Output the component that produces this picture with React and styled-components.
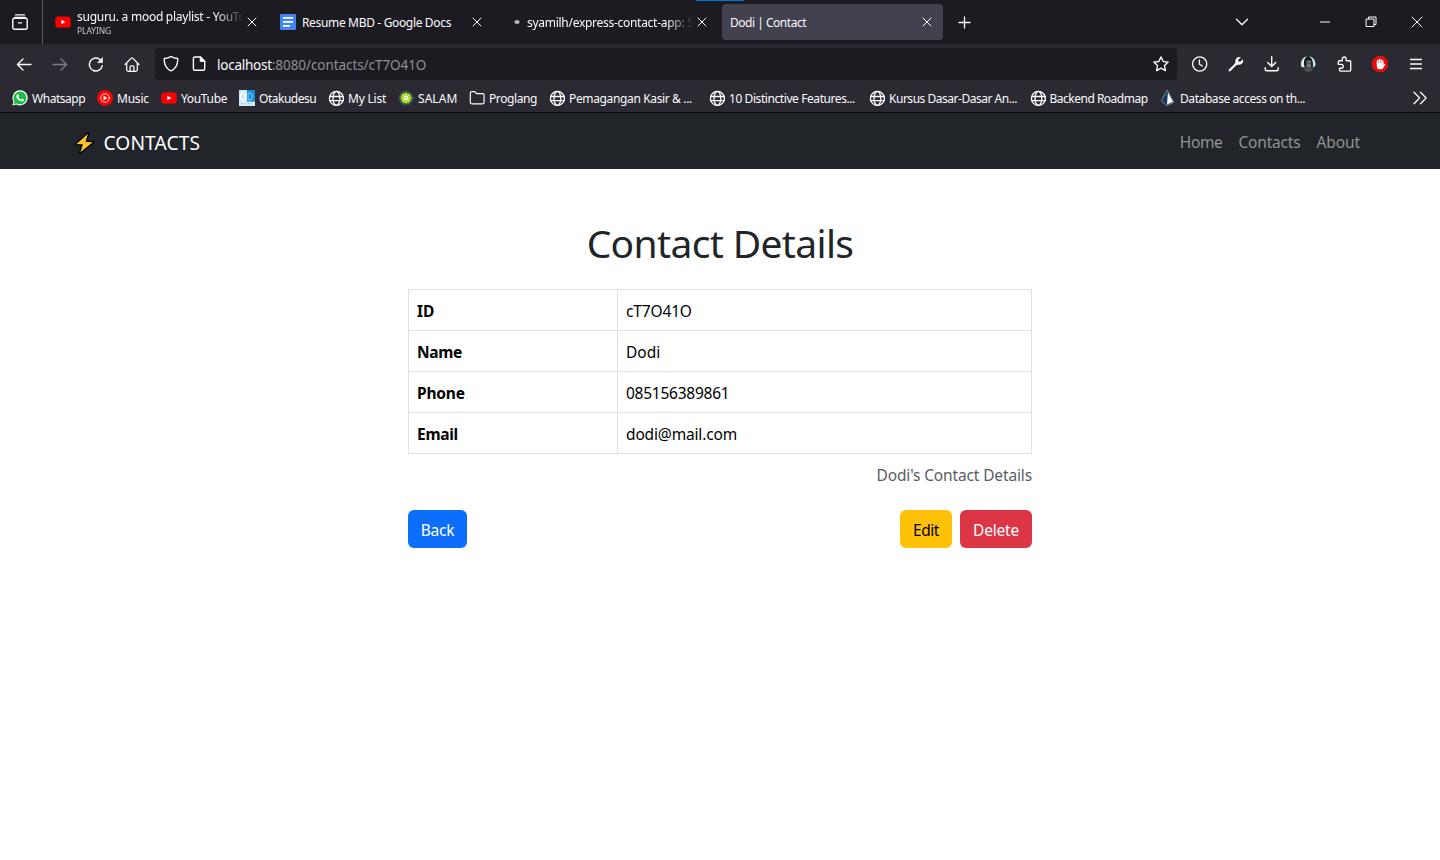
import React from "react";
import styled, { createGlobalStyle } from "styled-components";

const GlobalStyle = createGlobalStyle`
  * { box-sizing: border-box; }
  body {
    margin: 0;
    background: #fff;
    font-family: "Noto Sans", "Open Sans", sans-serif;
    overflow: hidden;
  }
`;

/* ---------- shared ---------- */

const Label = styled.span`
  white-space: pre;
  letter-spacing: ${(p) => p.$ls || 0}px;
`;

const Svg = styled.svg`
  display: block;
  flex: none;
  width: ${(p) => p.$size || 16}px;
  height: ${(p) => p.$size || 16}px;
  fill: none;
  stroke: ${(p) => p.$color || "#fbfbfe"};
  stroke-width: ${(p) => p.$w || 1.25};
  stroke-linecap: round;
  stroke-linejoin: round;
`;

const Icon = ({ children, size, color, w, box = 16 }) => (
  <Svg viewBox={`0 0 ${box} ${box}`} $size={size || box} $color={color} $w={w} aria-hidden="true">
    {children}
  </Svg>
);

/* ---------- icons ---------- */

const YouTubeIcon = () => (
  <Icon>
    <rect x="0.3" y="2.6" width="15.4" height="10.9" rx="2.8" fill="#f00" stroke="none" />
    <path d="M6.4 5.7v4.6L10.4 8z" fill="#fff" stroke="none" />
  </Icon>
);

const DocsIcon = () => (
  <Icon>
    <rect width="16" height="16" rx="1.2" fill="#4285f4" stroke="none" />
    <path d="M3 3h10v1.7H3zM3 7h10v1.7H3zM3 11h7v1.7H3z" fill="#fff" stroke="none" />
  </Icon>
);

const SpinnerIcon = () => (
  <Icon>
    <ellipse cx="12" cy="8" rx="2.6" ry="2" fill="#b9b9bd" stroke="none" />
  </Icon>
);

const CloseIcon = () => (
  <Icon w="1">
    <path d="M4 4l8 8M12 4l-8 8" />
  </Icon>
);

const TabsIcon = () => (
  <Icon w="1.4">
    <path d="M3.600 0.900h8.800" />
    <rect x="0.800" y="4.200" width="14.400" height="11" rx="1.800" />
    <path d="M2.200 4.200q.3-.7 1-.7h9.600q.7 0 1 .7" />
    <path d="M6.500 8.900h3" />
  </Icon>
);

const BackIcon = ({ color }) => (
  <Icon color={color} w="1.3">
    <path d="M15 8.500H1.500M7 3L1.400 8.500 7 14" />
  </Icon>
);

const ForwardIcon = () => (
  <Icon color="#7d7c83" w="1.3">
    <path d="M1 8.500h13.500M9 3l5.600 5.500L9 14" />
  </Icon>
);

const ReloadIcon = () => (
  <Icon w="1.4">
    <path d="M14.300 9.700A6.500 6.500 0 1 1 12.600 4" />
    <path d="M14.500 1.900v4.700H9.800z" fill="#fbfbfe" strokeWidth="0.600" />
  </Icon>
);

const HomeIcon = () => (
  <Icon>
    <path d="M1 8.500L7.300 2.100q.7-.7 1.400 0L15 8.500M2.700 7.200v6.600q0 1.500 1.500 1.500h7.600q1.500 0 1.500-1.500V7.200" />
    <path d="M6.100 15.200v-4.300q0-1 1-1h1.800q1 0 1 1v4.300" />
  </Icon>
);

const ShieldIcon = () => (
  <Icon w="1.35">
    <path d="M8 .4c2 1.400 4.300 1.900 6.700 2.100.3 4.800-1 9.800-6.700 12.400C2.300 12.300 1 7.300 1.300 2.500 3.700 2.300 6 1.800 8 .4z" />
  </Icon>
);

const PageIcon = () => (
  <Icon w="1.400">
    <path d="M3.900 1h5.600l4.200 4.200v7.500q0 1.500-1.500 1.500H3.900q-1.500 0-1.500-1.500V2.500Q2.400 1 3.900 1z" />
    <path d="M9.200 1v4.500h4.500z" fill="#fbfbfe" strokeWidth="0.800" />
  </Icon>
);

const StarIcon = () => (
  <Icon w="1.35">
    <path d="M8 .9l2.200 4.600 5 .6-3.700 3.500.9 5L8 12.200l-4.400 2.400.9-5L.8 6.100l5-.6z" />
  </Icon>
);

const HistoryIcon = () => (
  <Icon w="1.300">
    <circle cx="7.700" cy="8" r="7.100" />
    <path d="M7.400 3.800v4.500l3 1.700" />
  </Icon>
);

const WrenchIcon = () => (
  <Icon>
    <path d="M1.700 14.300L8.300 7.700" strokeWidth="2.300" />
    <path
      d="M12.900 1.200A4.200 4.200 0 0 0 7.400 6.300L6.800 8l1.300 1.300 1.800-.6A4.200 4.200 0 0 0 14.900 3.200L12.300 5.800 10.400 5.600 10.200 3.800z"
      fill="#fbfbfe"
      stroke="none"
    />
  </Icon>
);

const DownloadIcon = () => (
  <Icon w="1.400">
    <path d="M7.700 .8v9.600M3.700 6.500l4 4 4-4M1.200 11.800v1.400q0 1.500 1.500 1.500h10q1.500 0 1.500-1.500v-1.400" />
  </Icon>
);

const AvatarIcon = () => (
  <Icon>
    <circle cx="8" cy="8" r="7.900" fill="#30383a" stroke="none" />
    <path d="M1.500 11C0 6 2 1.800 7 .3 4.200 3 4 7 4.600 11.200z" fill="#d9f0f1" stroke="none" />
    <path d="M9.500.4c4 .6 6.700 4.600 5.800 9.400L13 11.600c.2-3.600.2-7.800-3.500-11.200z" fill="#bfe6e8" stroke="none" />
    <path d="M4.100 5Q5 1 8 1q3.500.2 4.300 4.500v4H3.900z" fill="#15181a" stroke="none" />
    <path d="M6.300 5q2.600-1.600 4.800 0l-.1 5.400q-2.200 2.600-4.400 0z" fill="#70777a" stroke="none" />
    <path d="M4.400 14.800q.3-3.700 4-3.700t4 3.300q-3.600 2.400-8 .4z" fill="#4c5356" stroke="none" />
    <path d="M6.900 7h1M9.300 7h1" stroke="#23292b" strokeWidth=".8" />
  </Icon>
);

const PuzzleIcon = () => (
  <Icon w="1.350">
    <path d="M2.300 6.800V5.700q0-1 1-1h3V2.900a1.900 1.900 0 0 1 3.800 0v1.800h3.600q1 0 1 1v8.300q0 1.100-1.100 1.100h-9q-1.100 0-1.100-1.100v-1.800h1.800a1.700 1.700 0 0 0 0-3.900H2.300z" />
  </Icon>
);

const BlockIcon = () => (
  <Icon>
    <path d="M4.700 0h6.600L16 4.700v6.600L11.300 16H4.700L0 11.300V4.700z" fill="#e40d0d" stroke="none" />
    <path d="M5.500 8V4.600M7.300 7.500V3.400M9.100 7.500V3.700M10.800 8V5" stroke="#fff" strokeWidth="1.400" />
    <path d="M4.800 7h6.700v1.700l1-.8q.9-.2.8.6l-2.100 3.600q-.8 1.200-2.300 1.200H7.700q-2.900 0-2.900-3z" fill="#fff" stroke="none" />
  </Icon>
);

const MenuIcon = () => (
  <Icon w="1.300">
    <path d="M2.500 3.500h11M2.500 8h11M2.500 12.500h11" />
  </Icon>
);

const PlusIcon = () => (
  <Icon w="1.300">
    <path d="M8.500 3v11M3 8.500h11" />
  </Icon>
);

const ChevronIcon = () => (
  <Icon w="1.300">
    <path d="M2.500 5.300L8 10.700l5.500-5.400" />
  </Icon>
);

const WhatsappIcon = () => (
  <Icon>
    <path d="M.4 15.600l1.100-4A7.600 7.600 0 1 1 4.500 14.500z" fill="#fff" stroke="none" />
    <path d="M1.800 14.200l.8-2.800A6.400 6.400 0 1 1 4.800 13.500z" fill="#15bd43" stroke="none" />
    <path
      d="M5.700 4.400l.9.100.7 1.700-.8 1q1 1.700 2.700 2.400l1-1 1.700.8q.3 1.900-1.700 2.100-5.300-.8-6.100-5.400.3-1.500 1.600-1.700z"
      fill="#fff"
      stroke="none"
    />
  </Icon>
);

const MusicIcon = () => (
  <Icon>
    <circle cx="8" cy="8" r="7.900" fill="#f00" stroke="none" />
    <circle cx="8" cy="8" r="4.300" stroke="#fff" strokeWidth=".8" />
    <path d="M6.500 5.600v4.800L10.400 8z" fill="#fff" stroke="none" />
  </Icon>
);

const OtakuIcon = () => (
  <Icon>
    <path d="M0 0h8v16H0z" fill="#cbe9f8" stroke="none" />
    <path d="M8 0h8v11.500H8z" fill="#168edb" stroke="none" />
    <path d="M0 11.500h16V16H0z" fill="#d7edf8" stroke="none" />
    <rect x="2" y="2.600" width="4" height="8" rx="2" stroke="#fff" strokeWidth="1.300" />
    <path d="M9.500 3h1.500q2.400.2 2.400 3.500T11 10H9.500z" stroke="#8ed5fb" strokeWidth="1" />
    <path d="M2 13.600h12" stroke="#83bddd" strokeWidth="1.300" strokeDasharray="1 1.400" strokeLinecap="butt" />
  </Icon>
);

const GlobeIcon = () => (
  <Icon w="1.300">
    <circle cx="8.400" cy="8.400" r="7" />
    <ellipse cx="8.400" cy="8.400" rx="3.400" ry="7" />
    <path d="M1.700 6.500h13.400M1.700 10.700h13.400" />
  </Icon>
);

const SalamIcon = () => (
  <Icon>
    <circle cx="8" cy="8" r="6.400" stroke="#42705f" strokeWidth="2" strokeDasharray="1.700 1.200" strokeLinecap="butt" />
    <circle cx="8" cy="8" r="5.500" fill="#91c81e" stroke="none" />
    <path d="M8 3.800V12.200M3.800 8h8.400M5 5l6 6M11 5l-6 6" stroke="#e2f36b" strokeWidth="1.100" />
    <circle cx="8" cy="8" r="1.900" fill="#fff" stroke="none" />
    <circle cx="8" cy="8" r=".7" fill="#6fa62a" stroke="none" />
  </Icon>
);

const FolderIcon = () => (
  <Icon w="1.200">
    <path d="M1.300 12.300V3.200q0-1.500 1.500-1.500h3l1.700 2h6.100q1.500 0 1.500 1.500v7.100q0 1.500-1.500 1.500H2.800q-1.500 0-1.500-1.500z" />
  </Icon>
);

const PrismaIcon = () => (
  <Icon>
    <path d="M7.400.4l6.400 11.900-7 3.300L1.500 11z" fill="#173a58" stroke="#8ba3b5" strokeWidth=".8" />
    <path d="M7.900 2.500l5 9.300-5.900 2.800z" fill="#fff" stroke="none" />
  </Icon>
);

const OverflowIcon = () => (
  <Icon w="1.300">
    <path d="M2 2.300L7.600 8 2 13.700M8.500 2.300L14.100 8l-5.600 5.700" />
  </Icon>
);

const BoltIcon = () => (
  <Icon box={24}>
    <path
      d="M15.800 1.900L3.400 12.900q-.3.700.5.700l6.200.2-2.700 8.200q.1.700.8.300L21.800 11.300q.3-.8-.5-.8l-6.900-.2 2.300-7.800q0-.9-.9-.6z"
      fill="#ffc02e"
      stroke="#000"
      strokeWidth="1.300"
    />
  </Icon>
);

/* ---------- tab strip ---------- */

const TabStrip = styled.header`
  position: relative;
  display: flex;
  height: 44px;
  background: #1c1b22;
  color: #fbfbfe;
`;

const LoadAccent = styled.div`
  position: absolute;
  top: 0;
  left: 696px;
  width: 48px;
  height: 1px;
  background: #0078d7;
`;

const TabsButton = styled.div`
  display: flex;
  align-items: center;
  justify-content: center;
  width: 43px;
  padding-right: 2px;
  border-right: 1px solid #5b5b62;
`;

const TabList = styled.div`
  display: flex;
  gap: 4px;
  padding: 4px 0 4px 4px;
`;

const Tab = styled.div`
  display: flex;
  align-items: center;
  width: 221px;
  height: 36px;
  padding: 0 8px;
  border-radius: 4px;
  background: ${(p) => (p.$active ? "#42414d" : "transparent")};
`;

const TabText = styled.div`
  display: flex;
  flex-direction: column;
  flex: 1;
  min-width: 0;
  margin-left: ${(p) => (p.$icon ? 6 : 0)}px;
  padding-top: ${(p) => (p.$stacked ? 0 : 2)}px;
  overflow: hidden;
  font-size: 12px;
  line-height: 16px;
  mask-image: ${(p) => (p.$fade ? "linear-gradient(to left, transparent 0, #000 28px)" : "none")};
`;

const TabStatus = styled(Label)`
  font-size: 8.5px;
  line-height: 11px;
  color: #c7c7cb;
`;

const TabClose = styled.div`
  display: flex;
  margin-bottom: 1px;
`;

const StripButton = styled.div`
  display: flex;
  align-items: center;
  justify-content: center;
  width: ${(p) => p.$width}px;
  margin-left: ${(p) => p.$left || 0}px;
`;

const WindowControls = styled.div`
  display: flex;
  margin-left: auto;
`;

const WindowButton = styled.div`
  display: flex;
  align-items: center;
  justify-content: center;
  width: 46px;
  height: 43px;
`;

/* ---------- navigation toolbar ---------- */

const Toolbar = styled.div`
  display: flex;
  align-items: center;
  height: 40px;
  padding: 0 6px;
  background: #2b2a33;
`;

const ToolButton = styled.div`
  display: flex;
  align-items: center;
  justify-content: center;
  width: 36px;
  height: 32px;
`;

const UrlBar = styled.div`
  display: flex;
  align-items: center;
  width: 1022px;
  height: 32px;
  margin: 0 5px 0 5px;
  padding: 0 8px;
  border-radius: 4px;
  background: #1c1b22;
`;

const UrlIcons = styled.div`
  display: flex;
  gap: 12px;
`;

const Url = styled.div`
  flex: 1;
  margin-left: 10px;
  padding-top: 2px;
  font-size: 13.5px;
  line-height: 20px;
  color: #8f8f95;
`;

const Host = styled(Label)`
  color: #fbfbfe;
`;

/* ---------- bookmarks ---------- */

const Bookmarks = styled.nav`
  display: flex;
  align-items: center;
  height: 29px;
  padding: 0 12px;
  border-bottom: 1px solid #0c0c0d;
  background: #2b2a33;
  color: #fbfbfe;
  font-size: 12px;
  line-height: 16px;
`;

const Bookmark = styled.div`
  display: flex;
  align-items: center;
  gap: 4px;
  width: ${(p) => p.$width}px;
`;

const BookmarkName = styled(Label)`
  padding-top: 1px;
`;

const BookmarkOverflow = styled.div`
  margin-left: auto;
`;

/* ---------- page ---------- */

const SiteNav = styled.nav`
  display: flex;
  align-items: center;
  justify-content: space-between;
  height: 56px;
  padding: 3px 80px 0 72px;
  background: #212529;
`;

const Brand = styled.div`
  display: flex;
  align-items: center;
  gap: 7.5px;
  color: #fff;
  font-size: 19.2px;
  line-height: 30px;
`;

const Links = styled.div`
  display: flex;
  gap: 16px;
  padding-bottom: 1px;
  color: #909294;
  font-size: 15.5px;
  line-height: 24px;
`;

const Content = styled.main`
  width: 624px;
  margin: 0 auto;
  padding-top: 50px;
`;

const Title = styled.h1`
  margin: 0 0 22px;
  color: #212529;
  font-size: 39px;
  font-weight: 400;
  line-height: 48px;
  text-align: center;
`;

const Table = styled.table`
  width: 100%;
  border-collapse: collapse;
  table-layout: fixed;
  font-size: 15.5px;
  line-height: 24px;
  color: #000;
`;

const Cell = styled.td`
  width: ${(p) => (p.$head ? "209px" : "auto")};
  height: 41px;
  padding: 9px 8px 7px;
  border: 1px solid #dee2e6;
  font-weight: ${(p) => (p.$head ? 700 : 400)};
`;

const Caption = styled.p`
  margin: 9px 0 0;
  color: #595e62;
  font-size: 15.5px;
  line-height: 24px;
  text-align: right;
`;

const Actions = styled.div`
  display: flex;
  gap: 8px;
  margin-top: 23px;
`;

const Button = styled.button`
  display: flex;
  align-items: center;
  justify-content: center;
  width: ${(p) => p.$width}px;
  height: 38px;
  margin: 0 ${(p) => (p.$push ? "auto" : "0")} 0 0;
  padding: 1px 0 0;
  border: 0;
  border-radius: 6px;
  background: ${(p) => p.$bg};
  color: ${(p) => p.$fg || "#fff"};
  font: 15.5px/24px "Noto Sans", "Open Sans", sans-serif;
`;

const bookmarks = [
  ["Whatsapp", WhatsappIcon, 85, -0.46],
  ["Music", MusicIcon, 64, -0.22],
  ["YouTube", YouTubeIcon, 78, -0.34],
  ["Otakudesu", OtakuIcon, 89, -0.48],
  ["My List", GlobeIcon, 70, -0.2],
  ["SALAM", SalamIcon, 71, 0.05],
  ["Proglang", FolderIcon, 80, -0.4],
  ["Pemagangan Kasir & ...", GlobeIcon, 160, -0.36],
  ["10 Distinctive Features...", GlobeIcon, 160, -0.42],
  ["Kursus Dasar-Dasar An...", GlobeIcon, 160.5, -0.48],
  ["Backend Roadmap", GlobeIcon, 130.5, -0.5],
  ["Database access on th...", PrismaIcon, 150, -0.42],
];

const rows = [
  ["ID", "cT7O41O", 0, -0.15],
  ["Name", "Dodi", -0.35, 0],
  ["Phone", "085156389861", -0.2, -0.25],
  ["Email", "dodi@mail.com", -0.3, -0.15],
];

export default function App() {
  return (
    <>
      <GlobalStyle />
      <TabStrip>
        <LoadAccent />
        <TabsButton><TabsIcon /></TabsButton>
        <TabList>
          <Tab>
            <YouTubeIcon />
            <TabText $icon $fade $stacked>
              <Label $ls={-0.26}>suguru. a mood playlist - YouTu</Label>
              <TabStatus $ls={-0.1}>PLAYING</TabStatus>
            </TabText>
            <TabClose><CloseIcon /></TabClose>
          </Tab>
          <Tab>
            <DocsIcon />
            <TabText $icon><Label $ls={-0.34}>Resume MBD - Google Docs</Label></TabText>
            <TabClose><CloseIcon /></TabClose>
          </Tab>
          <Tab>
            <SpinnerIcon />
            <TabText $icon $fade><Label $ls={-0.28}>syamilh/express-contact-app: S</Label></TabText>
            <TabClose><CloseIcon /></TabClose>
          </Tab>
          <Tab $active>
            <TabText><Label $ls={-0.48}>Dodi | Contact</Label></TabText>
            <TabClose><CloseIcon /></TabClose>
          </Tab>
        </TabList>
        <StripButton $width={36} $left={3}><PlusIcon /></StripButton>
        <WindowControls>
          <StripButton $width={40}><ChevronIcon /></StripButton>
          <StripButton $width={40} />
          <WindowButton>
            <Icon w="1"><path d="M3 8h10" strokeLinecap="butt" /></Icon>
          </WindowButton>
          <WindowButton>
            <Icon w="1"><path d="M3.500 5h7.500v7.500H3.500zM5.500 5V3H13v7.500h-2" strokeLinejoin="miter" /></Icon>
          </WindowButton>
          <WindowButton>
            <Icon w="1"><path d="M3 3l10 10M13 3L3 13" /></Icon>
          </WindowButton>
        </WindowControls>
      </TabStrip>

      <Toolbar>
        <ToolButton><BackIcon /></ToolButton>
        <ToolButton><ForwardIcon /></ToolButton>
        <ToolButton><ReloadIcon /></ToolButton>
        <ToolButton><HomeIcon /></ToolButton>
        <UrlBar>
          <UrlIcons><ShieldIcon /><PageIcon /></UrlIcons>
          <Url>
            <Host $ls={-0.25}>localhost</Host>
            <Label $ls={-0.07}>:8080/contacts/cT7O41O</Label>
          </Url>
          <StarIcon />
        </UrlBar>
        <ToolButton><HistoryIcon /></ToolButton>
        <ToolButton><WrenchIcon /></ToolButton>
        <ToolButton><DownloadIcon /></ToolButton>
        <ToolButton><AvatarIcon /></ToolButton>
        <ToolButton><PuzzleIcon /></ToolButton>
        <ToolButton><BlockIcon /></ToolButton>
        <ToolButton><MenuIcon /></ToolButton>
      </Toolbar>

      <Bookmarks>
        {bookmarks.map(([name, Glyph, width, ls]) => (
          <Bookmark key={name} $width={width}>
            <Glyph />
            <BookmarkName $ls={ls}>{name}</BookmarkName>
          </Bookmark>
        ))}
        <BookmarkOverflow><OverflowIcon /></BookmarkOverflow>
      </Bookmarks>

      <SiteNav>
        <Brand>
          <BoltIcon />
          <Label $ls={0.1}>CONTACTS</Label>
        </Brand>
        <Links>
          <Label $ls={-0.35}>Home</Label>
          <Label $ls={-0.2}>Contacts</Label>
          <Label $ls={-0.08}>About</Label>
        </Links>
      </SiteNav>

      <Content>
        <Title><Label $ls={-0.65}>Contact Details</Label></Title>
        <Table>
          <tbody>
            {rows.map(([key, value, keyLs, valueLs]) => (
              <tr key={key}>
                <Cell as="th" align="left" $head><Label $ls={keyLs}>{key}</Label></Cell>
                <Cell><Label $ls={valueLs}>{value}</Label></Cell>
              </tr>
            ))}
          </tbody>
        </Table>
        <Caption><Label $ls={-0.14}>Dodi's Contact Details</Label></Caption>
        <Actions>
          <Button $width={59} $bg="#0d6efd" $push><Label $ls={-0.3}>Back</Label></Button>
          <Button $width={52} $bg="#ffc107" $fg="#000"><Label $ls={-0.4}>Edit</Label></Button>
          <Button $width={72} $bg="#dc3545"><Label $ls={-0.2}>Delete</Label></Button>
        </Actions>
      </Content>
    </>
  );
}
